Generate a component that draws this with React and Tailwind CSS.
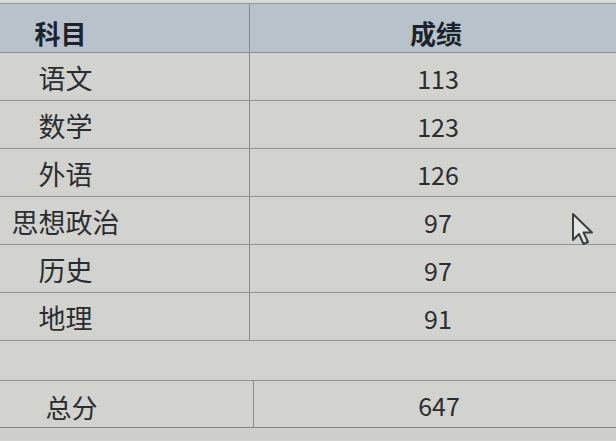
import React from 'react';

// Score table: left column is partly cut off, so the table is shifted left
const rows = [
  { subject: '语文', score: '113' },
  { subject: '数学', score: '123' },
  { subject: '外语', score: '126' },
  { subject: '思想政治', score: '97' },
  { subject: '历史', score: '97' },
  { subject: '地理', score: '91' },
];

const font = { fontFamily: '"Noto Sans CJK SC", "Noto Sans", sans-serif' };

// Mouse pointer drawn over the table
const Cursor = () => (
  <svg className="absolute left-[571px] top-[212px]" width="26" height="36" viewBox="0 0 26 36">
    <path
      d="M2 2 L2 28 L8 22 L12.5 32 L17 30 L12.5 20.5 L21 20.5 Z"
      fill="#e4e4e2"
      stroke="#3a3f44"
      strokeWidth="2"
      strokeLinejoin="round"
    />
  </svg>
);

const App = () => {
  return (
    <div className="relative w-[616px] h-[441px] overflow-hidden bg-[#d2d2cf] text-[#2b2e31]" style={font}>
      <div className="-ml-[116px] w-[742px]">
        {/* Strip above the header */}
        <div className="h-[4px] bg-[#d9d9d5] border-b border-[#8e999f]" />

        {/* Header */}
        <div className="flex h-[49px] bg-[#b7c2cb] border-b border-[#86929a] font-bold text-[#1d232b] text-[26px]">
          <div className="w-[366px] border-r border-[#7f8c94] flex items-center justify-center pt-2 pr-[12px]">科目</div>
          <div className="flex-1 flex items-center justify-center pt-2 pr-[4px]">成绩</div>
        </div>

        {/* Subject rows */}
        {rows.map((row) => (
          <div key={row.subject} className="flex h-[48px] border-b border-[#8a9599]">
            <div className="w-[366px] border-r border-[#7f8c94] flex items-center justify-center pt-1 pr-[2px] text-[27px]">
              {row.subject}
            </div>
            <div className="flex-1 flex items-center justify-center pt-1 text-[25px]">{row.score}</div>
          </div>
        ))}

        {/* Empty spacer row */}
        <div className="h-[40px] border-b border-[#8a9599]" />

        {/* Total */}
        <div className="flex h-[47px] border-b border-[#7f8a8f]">
          <div className="w-[370px] border-r border-[#7f8c94] flex items-center justify-center pt-1 pl-[6px] text-[26px]">
            总分
          </div>
          <div className="flex-1 flex items-center justify-center pt-1 pr-[2px] text-[25px]">647</div>
        </div>

        <div className="h-[12px] bg-[#cfcfcc]" />
      </div>

      <Cursor />
    </div>
  );
};

export default App;
